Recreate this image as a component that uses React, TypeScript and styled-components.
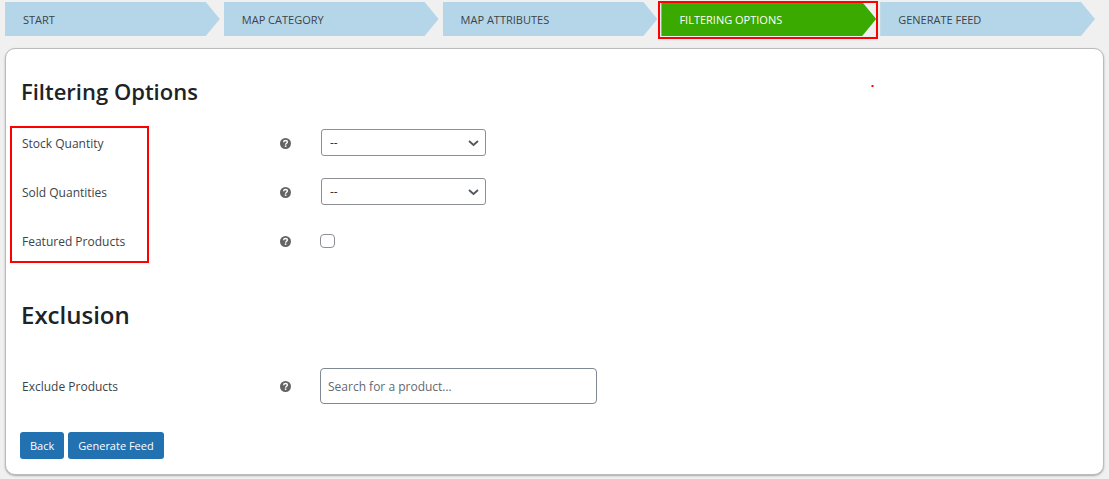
import React, { useState } from "react";
import styled, { createGlobalStyle, css } from "styled-components";

const GlobalStyle = createGlobalStyle`
  *, *::after { box-sizing: border-box; }
  body {
    margin: 0;
    background: #f0f0f0;
    color: #3c434a;
    font-family: "Open Sans", "Noto Sans", sans-serif;
    font-size: 12px;
    line-height: 20px;
  }
`;

const Page = styled.main`
  padding: 2px 5px 4px;
`;

const Steps = styled.nav`
  display: grid;
  grid-template-columns: repeat(5, 1fr);
  gap: 4px;
  padding-right: 9px;
`;

const StepSlot = styled.div<{ $marked: boolean }>`
  position: relative;
  ${(p) =>
    p.$marked &&
    css`
      &::after {
        content: "";
        position: absolute;
        inset: -1px -2px -3px -3px;
        border: 2px solid #f00;
        pointer-events: none;
      }
    `}
`;

const Step = styled.a<{ $active: boolean }>`
  display: block;
  height: 34px;
  padding-left: 18px;
  font-size: 11px;
  line-height: 35px;
  text-decoration: none;
  text-transform: uppercase;
  white-space: nowrap;
  color: ${(p) => (p.$active ? "#fff" : "#3c434a")};
  background: ${(p) => (p.$active ? "#3aa900" : "#b5d6e9")};
  clip-path: polygon(0 0, calc(100% - 14px) 0, 100% 50%, calc(100% - 14px) 100%, 0 100%);
`;

const Panel = styled.form`
  position: relative;
  margin-top: 12px;
  padding: 26px 14px 15px;
  background: #fff;
  border: 1px solid #bbb;
  border-radius: 10px;
  box-shadow: 0 1px 2px rgba(0, 0, 0, 0.3);
`;

const Title = styled.h2`
  margin: 0 0 12px 1px;
  font-size: 22px;
  font-weight: 600;
  line-height: 32px;
  color: #1d2327;
`;

const SectionTitle = styled(Title)`
  margin: 33px 0 31px 1px;
  font-size: 24px;
`;

const Group = styled.div<{ $marked?: boolean }>`
  position: relative;
  ${(p) =>
    p.$marked &&
    css`
      &::after {
        content: "";
        position: absolute;
        top: 7px;
        bottom: 3px;
        left: -10px;
        width: 139px;
        border: 2px solid #f00;
        pointer-events: none;
      }
    `}
`;

const Row = styled.div`
  display: grid;
  grid-template-columns: 258px 40px 1fr;
  align-items: center;
  height: 49px;
  padding-left: 2px;
`;

const HelpIcon = styled.svg`
  display: block;
  width: 11px;
  height: 11px;
`;

const SelectBox = styled.div`
  position: relative;
  width: 165px;
  margin: 0 0 2px 1px;
`;

const Select = styled.select`
  display: block;
  appearance: none;
  width: 100%;
  height: 27px;
  padding: 0 24px 0 8px;
  border: 1px solid #8c8f94;
  border-radius: 3px;
  background: #fff;
  color: #2c3338;
  font: inherit;
`;

const Chevron = styled.svg`
  position: absolute;
  top: 9px;
  right: 7px;
  width: 11px;
  height: 10px;
  pointer-events: none;
`;

const Checkbox = styled.input`
  appearance: none;
  width: 15px;
  height: 14px;
  margin: 0 0 2px;
  border: 1px solid #8c8f94;
  border-radius: 4px;
  background: #fff;
  &:checked {
    background: #2271b1;
  }
`;

const SearchInput = styled.input`
  width: 277px;
  height: 36px;
  margin: 0 0 2px;
  padding: 2px 7px 0;
  border: 1px solid #7e8993;
  border-radius: 4px;
  background: #fff;
  color: #2c3338;
  font: inherit;
  &::placeholder {
    color: #646970;
    opacity: 1;
  }
`;

const Actions = styled.div`
  display: flex;
  gap: 4px;
  margin-top: 21px;
`;

const Button = styled.button`
  height: 27px;
  padding: 0 10px;
  border: 0;
  border-radius: 3px;
  background: #2271b1;
  color: #fff;
  font: inherit;
  font-size: 11px;
  white-space: nowrap;
`;

const Dot = styled.span`
  position: absolute;
  top: 36px;
  right: 229px;
  width: 3px;
  height: 2px;
  background: #f00;
  border: solid #ff8080;
  border-width: 0 1px;
`;

const steps = ["Start", "Map Category", "Map Attributes", "Filtering Options", "Generate Feed"];

function Help() {
  return (
    <HelpIcon viewBox="0 0 11 11" role="img" aria-label="Help">
      <circle cx="5.5" cy="5.5" r="5.5" fill="#646464" />
      <path
        d="M3.6 4.3C3.7 3 4.5 2.5 5.6 2.5S7.4 3.1 7.4 4.1C7.4 5.3 5.6 5.3 5.6 6.7"
        fill="none"
        stroke="#fff"
        strokeWidth="1.4"
      />
      <rect x="4.8" y="7.4" width="1.6" height="1.5" fill="#fff" />
    </HelpIcon>
  );
}

function Field({ id, label, children }: { id: string; label: string; children: React.ReactNode }) {
  return (
    <Row>
      <label htmlFor={id}>{label}</label>
      <Help />
      {children}
    </Row>
  );
}

function Dropdown({ id }: { id: string }) {
  return (
    <SelectBox>
      <Select id={id}>
        <option>--</option>
      </Select>
      <Chevron viewBox="0 0 11 10" aria-hidden="true">
        <path d="M1 3l4.5 4 4.5-4" fill="none" stroke="#50575e" strokeWidth="1.8" />
      </Chevron>
    </SelectBox>
  );
}

export default function App() {
  const [active, setActive] = useState(3);
  return (
    <Page>
      <GlobalStyle />
      <Steps aria-label="Feed steps">
        {steps.map((name, i) => (
          <StepSlot key={name} $marked={i === active}>
            <Step href="#" $active={i === active} onClick={() => setActive(i)}>
              {name}
            </Step>
          </StepSlot>
        ))}
      </Steps>
      <Panel onSubmit={(e) => e.preventDefault()}>
        <Title>Filtering Options</Title>
        <Dot />
        <Group $marked>
          <Field id="stock" label="Stock Quantity">
            <Dropdown id="stock" />
          </Field>
          <Field id="sold" label="Sold Quantities">
            <Dropdown id="sold" />
          </Field>
          <Field id="featured" label="Featured Products">
            <Checkbox type="checkbox" id="featured" />
          </Field>
        </Group>
        <SectionTitle>Exclusion</SectionTitle>
        <Group>
          <Field id="exclude" label="Exclude Products">
            <SearchInput id="exclude" type="text" placeholder="Search for a product…" />
          </Field>
        </Group>
        <Actions>
          <Button type="button">Back</Button>
          <Button type="submit">Generate Feed</Button>
        </Actions>
      </Panel>
    </Page>
  );
}
